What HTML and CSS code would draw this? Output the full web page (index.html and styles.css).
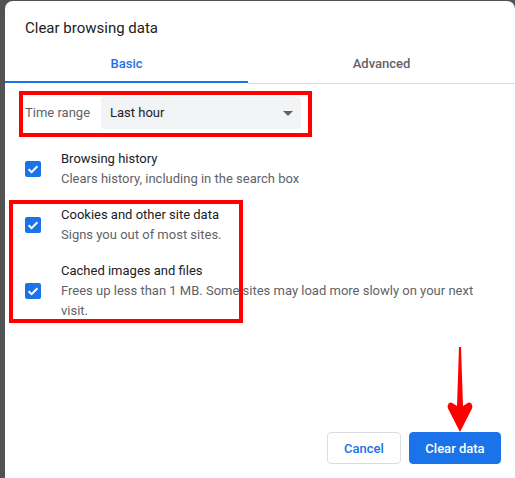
FILE: index.html
```html
<!DOCTYPE html>
<html>
<head>
<meta charset="utf-8">
<link rel="stylesheet" href="styles.css">
</head>
<body>
<div class="dialog">
  <div class="title">Clear browsing data</div>
  <div class="tabs">
    <div class="tab active">Basic</div>
    <div class="tab">Advanced</div>
  </div>
  <div class="range">
    <span class="range-label">Time range</span>
    <div class="select">
      <span>Last hour</span>
      <span class="caret"></span>
    </div>
  </div>
  <div class="options">
    <div class="option">
      <span class="check"><svg viewBox="0 0 16 16" width="16" height="16"><path d="M3.6 8.2 L6.6 11.1 L12.4 5.2" fill="none" stroke="#fff" stroke-width="2"/></svg></span>
      <div class="opt-text">
        <div class="opt-title">Browsing history</div>
        <div class="opt-sub">Clears history, including in the search box</div>
      </div>
    </div>
    <div class="option">
      <span class="check"><svg viewBox="0 0 16 16" width="16" height="16"><path d="M3.6 8.2 L6.6 11.1 L12.4 5.2" fill="none" stroke="#fff" stroke-width="2"/></svg></span>
      <div class="opt-text">
        <div class="opt-title">Cookies and other site data</div>
        <div class="opt-sub">Signs you out of most sites.</div>
      </div>
    </div>
    <div class="option">
      <span class="check"><svg viewBox="0 0 16 16" width="16" height="16"><path d="M3.6 8.2 L6.6 11.1 L12.4 5.2" fill="none" stroke="#fff" stroke-width="2"/></svg></span>
      <div class="opt-text">
        <div class="opt-title">Cached images and files</div>
        <div class="opt-sub">Frees up less than 1 MB. Some sites may load more slowly on your next visit.</div>
      </div>
    </div>
  </div>
  <div class="buttons">
    <button class="btn btn-cancel">Cancel</button>
    <button class="btn btn-primary">Clear data</button>
  </div>
</div>
<div class="mark mark-range"></div>
<div class="mark mark-options"></div>
<svg class="arrow" viewBox="0 0 40 100" width="40" height="100">
  <polygon fill="#f00" points="20,7 21,7 23,66 28.5,62.5 31,63 32.5,66 32,68.5 20,92 8,68.5 7.5,66 9,63 11.5,62.5 17,66 19,7"/>
</svg>
</body>
</html>
```
FILE: styles.css
```css
html, body {
  margin: 0;
  padding: 0;
}
body {
  background: #525252;
  width: 515px;
  height: 478px;
  overflow: hidden;
  position: relative;
  font-family: Roboto, "Liberation Sans", Arial, sans-serif;
  font-size: 13px;
  line-height: 20px;
  color: #202124;
}
.dialog {
  margin: 1px 0 0 5px;
  width: 510px;
  height: 490px;
  background: #fff;
  border-radius: 8px;
}
.title {
  padding: 17px 20px 0;
  font-size: 15px;
  line-height: 20px;
  color: #202124;
}
.tabs {
  display: flex;
  align-items: flex-start;
}
.tab {
  flex: auto;
  text-align: center;
  font-weight: 500;
  color: #5f6368;
  padding: 16px 0 9px;
  border-bottom: 1px solid #dadce0;
}
.tab.active {
  flex: 0 0 243px;
  color: #1a73e8;
  padding-bottom: 7px;
  border-bottom: 2px solid #1a73e8;
}
.range {
  display: flex;
  align-items: center;
  margin-top: 13px;
  padding-left: 20px;
}
.range-label {
  width: 76px;
  color: #5f6368;
}
.select {
  width: 200px;
  height: 32px;
  box-sizing: border-box;
  background: #f1f3f4;
  border-radius: 4px;
  display: flex;
  align-items: center;
  justify-content: space-between;
  padding: 0 8px 0 9px;
  color: #202124;
}
.caret {
  width: 0;
  height: 0;
  border-left: 5px solid transparent;
  border-right: 5px solid transparent;
  border-top: 5px solid #5f6368;
  margin-top: 1px;
}
.options {
  margin-top: 20px;
  display: flex;
  flex-direction: column;
  gap: 16px;
}
.option {
  display: flex;
  align-items: center;
  gap: 20px;
  padding: 0 20px;
}
.check {
  flex: none;
  width: 16px;
  height: 16px;
  background: #1a73e8;
  border-radius: 2px;
  display: block;
}
.check svg {
  display: block;
}
.opt-text {
  flex: 1;
}
.opt-sub {
  color: #5f6368;
}
.buttons {
  display: flex;
  justify-content: flex-end;
  gap: 8px;
  margin-top: 111px;
  padding-right: 14px;
}
.btn {
  height: 32px;
  box-sizing: border-box;
  border-radius: 4px;
  font-family: inherit;
  font-size: 13px;
  font-weight: 500;
  padding: 0;
}
.btn-cancel {
  width: 74px;
  background: #fff;
  color: #1a73e8;
  border: 1px solid #dadce0;
}
.btn-primary {
  width: 92px;
  background: #1a73e8;
  color: #fff;
  border: 1px solid #1a73e8;
}
.mark {
  position: absolute;
  border: 4px solid #f00;
  box-sizing: border-box;
}
.mark-range {
  left: 19px;
  top: 91px;
  width: 293px;
  height: 46px;
}
.mark-options {
  left: 9px;
  top: 200px;
  width: 234px;
  height: 123px;
}
.arrow {
  position: absolute;
  left: 440px;
  top: 340px;
}
```
